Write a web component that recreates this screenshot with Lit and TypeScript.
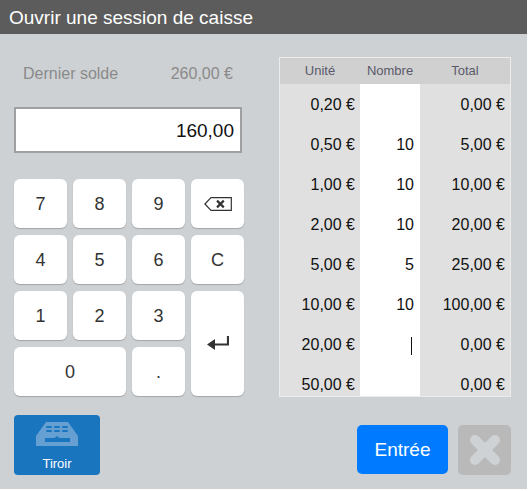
import { LitElement, html, css, svg } from "lit";
import { customElement } from "lit/decorators.js";

const rows: [string, string, string, boolean?][] = [
  ["0,20 €", "", "0,00 €"],
  ["0,50 €", "10", "5,00 €"],
  ["1,00 €", "10", "10,00 €"],
  ["2,00 €", "10", "20,00 €"],
  ["5,00 €", "5", "25,00 €"],
  ["10,00 €", "10", "100,00 €"],
  ["20,00 €", "", "0,00 €", true],
  ["50,00 €", "", "0,00 €"],
];

const backspace = svg`<svg class="ico" width="28" height="14" viewBox="0 0 28 14"><path d="M7 .7H27.3V13.300H7L.9 7Z" fill="none" stroke="#333" stroke-width="1.2"/><path d="M13 3.600l6.800 6.800M19.800 3.600L13 10.400" fill="none" stroke="#333" stroke-width="2.2"/></svg>`;
const enter = svg`<svg class="ico" width="22" height="15" viewBox="0 0 22 15"><path d="M21 0V8.500H6" fill="none" stroke="#333" stroke-width="2.2"/><path d="M0 8.500L8 3V14Z" fill="#333"/></svg>`;
const drawer = svg`<svg class="ico" width="42" height="24" viewBox="0 0 42 24"><path d="M10 0H32L42 14V24H0V14Z" fill="#66a0d3"/><g fill="#1a75bf"><rect x="10" y="4" width="6" height="2" rx="1"/><rect x="18" y="4" width="6" height="2" rx="1"/><rect x="26" y="4" width="6" height="2" rx="1"/><rect x="10" y="8" width="6" height="2" rx="1"/><rect x="18" y="8" width="6" height="2" rx="1"/><rect x="26" y="8" width="6" height="2" rx="1"/><path d="M9 16H18.500L21 14L23.500 16H34V20H9Z"/></g></svg>`;
const cross = svg`<svg width="30" height="30" viewBox="0 0 30 30"><path d="M5 5L25 25M25 5L5 25" stroke="#cfd2d5" stroke-width="10" stroke-linecap="round"/></svg>`;

@customElement("app-root")
export class AppRoot extends LitElement {
  static styles = css`
    :host { display: block; width: 529px; height: 491px; background: #fff; font-family: "Liberation Sans", Arial, sans-serif; }
    .win { width: 527px; height: 489px; background: #ced1d4; display: flex; flex-direction: column; }
    .title { height: 34px; flex: none; background: #5c5c5c; color: #fff; font-size: 19px; line-height: 35px; padding-left: 9px; box-sizing: border-box; }
    .main { flex: none; display: flex; padding: 23px 16px 0 14px; gap: 35px; }
    .left { width: 230px; display: flex; flex-direction: column; }
    .solde { height: 34px; display: flex; justify-content: space-between; align-items: center; padding: 0 11px 0 9px; color: #8a8a8a; font-size: 16px; margin-bottom: 16px; }
    .input { width: 228px; height: 46px; box-sizing: border-box; border: 2px solid #a0a0a0; background: #fff; color: #111; font-size: 19px; line-height: 44px; text-align: right; padding-right: 6px; margin-bottom: 26px; }
    .pad { display: grid; grid-template-columns: repeat(4, 53px); grid-auto-rows: 49px; gap: 7px 6px; }
    .key { background: #fff; border-radius: 6px; box-shadow: 0 1px 1px #a5a5a5; display: flex; align-items: center; justify-content: center; color: #333; font-size: 18px; padding-top: 2px; box-sizing: border-box; }
    .key .ico { margin-top: -2px; }
    .w2 { grid-column: span 2; }
    .h2 { grid-row: span 2; }
    .table { width: 232px; height: 340px; box-sizing: border-box; border: 1px solid #ececec; overflow: hidden; flex: none; }
    .row { display: grid; grid-template-columns: 80px 60px 90px; }
    .head { height: 26px; background: #d0d0d0; color: #5a5a6a; font-size: 13px; line-height: 26px; text-align: center; }
    .body { height: 40px; font-size: 16px; line-height: 42px; color: #111; text-align: right; }
    .body span { padding-right: 5px; }
    .body .qty { padding-right: 6px; }
    .unit, .tot { background: #e0e0e0; }
    .qty { background: #fff; }
    .caret { display: inline-block; width: 1px; height: 18px; background: #111; vertical-align: middle; margin-right: 2px; }
    .foot { flex: 1; display: flex; align-items: flex-start; padding: 18px 16px 0 14px; }
    .drawer { width: 86px; height: 60px; background: #1a75bf; border-radius: 4px; color: #fff; font-size: 13px; display: flex; flex-direction: column; align-items: center; padding-top: 7px; box-sizing: border-box; }
    .drawer .ico { display: block; margin-bottom: 10px; }
    .enter { margin: 10px 0 0 auto; width: 91px; height: 49px; background: #007bff; border-radius: 5px; color: #fff; font-size: 19px; display: flex; align-items: center; justify-content: center; }
    .close { margin: 10px 0 0 10px; width: 53px; height: 50px; background: #b9b9b9; border-radius: 5px; display: flex; align-items: center; justify-content: center; }
  `;

  render() {
    return html`<div class="win">
      <div class="title">Ouvrir une session de caisse</div>
      <div class="main">
        <div class="left">
          <div class="solde"><span>Dernier solde</span><span>260,00 €</span></div>
          <div class="input">160,00</div>
          <div class="pad">
            ${["7", "8", "9"].map((k) => html`<div class="key">${k}</div>`)}
            <div class="key">${backspace}</div>
            ${["4", "5", "6", "C"].map((k) => html`<div class="key">${k}</div>`)}
            ${["1", "2", "3"].map((k) => html`<div class="key">${k}</div>`)}
            <div class="key h2">${enter}</div>
            <div class="key w2">0</div>
            <div class="key">.</div>
          </div>
        </div>
        <div class="table">
          <div class="row head"><span>Unité</span><span>Nombre</span><span>Total</span></div>
          ${rows.map(
            ([u, n, t, c]) => html`<div class="row body">
              <span class="unit">${u}</span>
              <span class="qty">${c ? html`<i class="caret"></i>` : n}</span>
              <span class="tot">${t}</span>
            </div>`
          )}
        </div>
      </div>
      <div class="foot">
        <div class="drawer">${drawer}<span>Tiroir</span></div>
        <div class="enter">Entrée</div>
        <div class="close">${cross}</div>
      </div>
    </div>`;
  }
}
